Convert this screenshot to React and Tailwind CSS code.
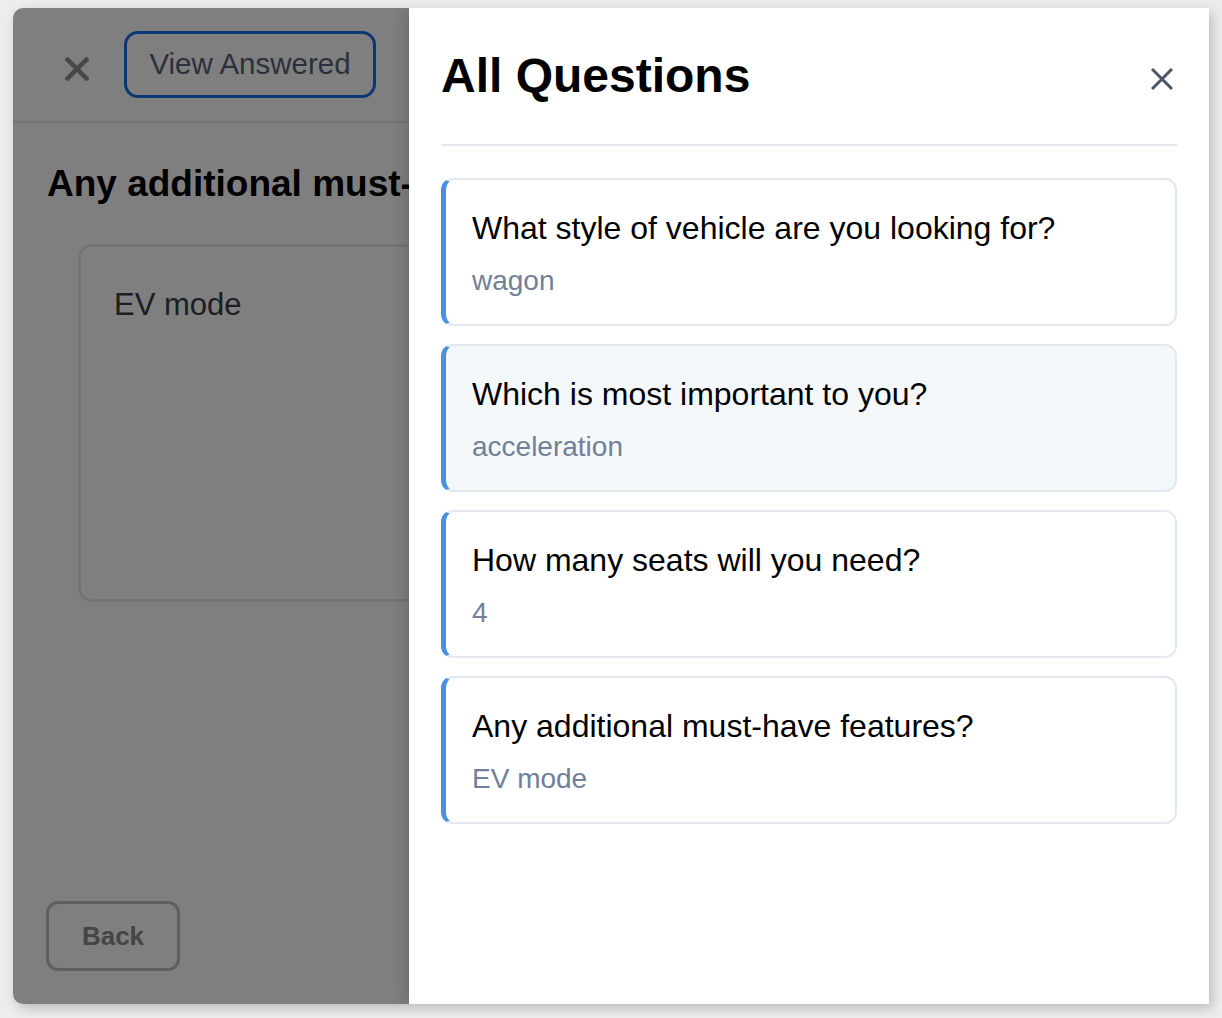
const ANSWERS = [
  { q: "What style of vehicle are you looking for?", a: "wagon" },
  { q: "Which is most important to you?", a: "acceleration", hover: true },
  { q: "How many seats will you need?", a: "4" },
  { q: "Any additional must-have features?", a: "EV mode" },
];

const FONT = { fontFamily: '"Liberation Sans", Arial, Helvetica, sans-serif' };

function CloseIcon({ size, stroke, className }) {
  return (
    <svg
      className={className}
      width={size}
      height={size}
      viewBox={`0 0 ${size} ${size}`}
      fill="none"
      stroke="currentColor"
      strokeWidth={stroke}
      aria-hidden
    >
      <path d={`M1 1L${size - 1} ${size - 1}M${size - 1} 1L1 ${size - 1}`} />
    </svg>
  );
}

function QuestionCard({ q, a, hover }) {
  return (
    <div
      className={`rounded-xl border-2 border-[#e2e8f0] border-l-[5px] border-l-[#4a90e2] pl-[26px] pr-6 pt-[25px] pb-[23px] ${hover ? "bg-[#f5f8fb]" : "bg-white"}`}
    >
      <p className="text-[32px] leading-[46px] text-black">{q}</p>
      <p className="mt-[10px] text-[28px] leading-[40px] text-[#718096]">{a}</p>
    </div>
  );
}

export default function App() {
  return (
    <div className="w-[1222px] h-[1018px] bg-[#ededed] pt-2 pl-[13px]" style={FONT}>
      <div className="relative w-[1196px] h-[996px] bg-white rounded-l-[10px] overflow-hidden shadow-[3px_4px_12px_rgba(0,0,0,0.22)]">
        {/* question page underneath */}
        <div className="flex flex-col h-full">
          <header className="h-[115px] shrink-0 flex items-start px-[52px] border-b-2 border-[#e2e8f0]">
            <CloseIcon size={24} stroke={4.5} className="mt-[49px] text-[#8e8e8e]" />
            <button
              type="button"
              className="ml-[35px] mt-[23px] w-[252px] h-[67px] rounded-[14px] border-[3px] border-[#1670e6] text-[29.5px] text-[#566278]"
            >
              View Answered
            </button>
          </header>

          <main className="flex-1 px-[34px] pt-[42px]">
            <h1 className="text-[37px] font-bold leading-none text-black whitespace-nowrap">
              Any additional must-have features?
            </h1>
            <div className="mt-[42px] ml-[31px] mr-[31px] h-[358px] rounded-[14px] border-[3px] border-[#e2e8f0] pt-[35px] px-[33px] text-[31px] leading-[45px] text-[#363c4a]">
              EV mode
            </div>
          </main>

          <footer className="px-[33px] pb-[33px]">
            <button
              type="button"
              className="w-[134px] h-[70px] rounded-[12px] border-[3px] border-[#bebebe] text-[26px] font-bold text-[#8a8a8a]"
            >
              Back
            </button>
          </footer>
        </div>

        {/* backdrop */}
        <div className="absolute inset-0 bg-black/50" />

        {/* drawer */}
        <aside className="absolute top-0 right-0 bottom-0 w-[800px] bg-white px-8 shadow-[-6px_0_12px_rgba(0,0,0,0.12)]">
          <div className="flex items-start justify-between pt-[44px] pb-[44px] border-b-2 border-[#e2e8f0]">
            <h2 className="text-[48px] font-bold leading-none text-black">All Questions</h2>
            <button type="button" className="mt-[12px] p-1 text-[#4a5568]" aria-label="Close">
              <CloseIcon size={22} stroke={3} />
            </button>
          </div>
          <div className="mt-[32px] flex flex-col gap-[18px]">
            {ANSWERS.map((item) => (
              <QuestionCard key={item.q} {...item} />
            ))}
          </div>
        </aside>
      </div>
    </div>
  );
}
